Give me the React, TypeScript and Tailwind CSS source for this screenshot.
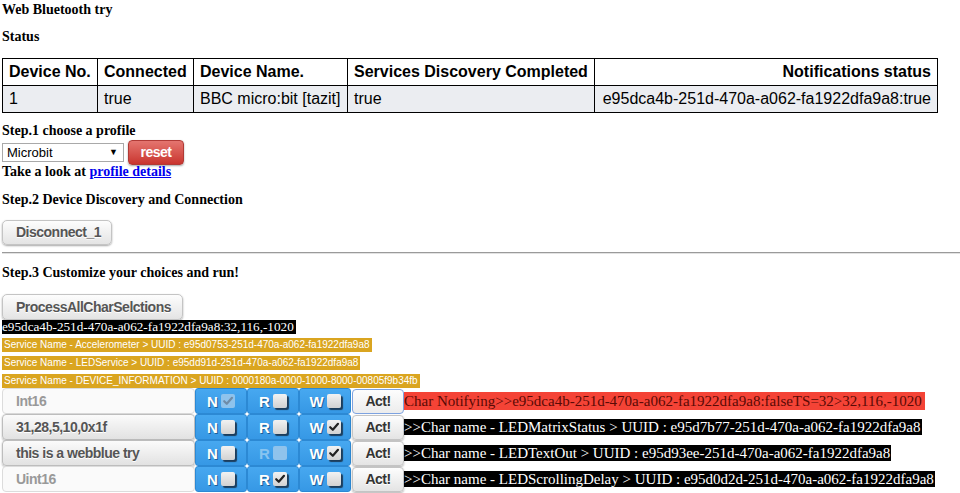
import React from "react";

function Check({ light }: { light?: boolean }) {
  return (
    <svg width="12" height="12" viewBox="0 0 12 12" className="block">
      <path d="M2.2 6.2 L4.8 8.8 L10 2.8" fill="none" stroke={light ? "#6f8ca8" : "#222"} strokeWidth="2.2" strokeLinecap="round" strokeLinejoin="round" />
    </svg>
  );
}

function Box({ checked, faded }: { checked?: boolean; faded?: boolean }) {
  if (faded) {
    return (
      <span className="inline-flex h-[14px] w-[14px] items-center justify-center rounded-[2px] bg-[#8fc3ec]">
        {checked && <Check light />}
      </span>
    );
  }
  return (
    <span className="inline-flex h-[14px] w-[14px] items-center justify-center rounded-[2px] bg-gradient-to-b from-[#f2f2f2] to-[#d2d2d2] shadow-[2px_2px_1px_#1c3d5c]">
      {checked && <Check />}
    </span>
  );
}

function Cell({ letter, checked, faded, dimLetter }: { letter: string; checked?: boolean; faded?: boolean; dimLetter?: boolean }) {
  return (
    <div className="flex h-[26px] w-[52px] items-center justify-center gap-[3px] rounded-[3px] border border-[#2c89d4] bg-gradient-to-b from-[#47a8f0] to-[#3698e5]">
      <span
        className={
          dimLetter
            ? "font-['Liberation_Sans',Arial,sans-serif] text-[15px] font-bold leading-none text-[#88c4f0]"
            : "font-['Liberation_Sans',Arial,sans-serif] text-[15px] font-bold leading-none text-white [text-shadow:1px_1px_0_#1d5f96]"
        }
      >
        {letter}
      </span>
      <Box checked={checked} faded={faded} />
    </div>
  );
}

const sans = "font-['Liberation_Sans',Arial,sans-serif]";
const serif = "font-['Liberation_Serif','Times_New_Roman',serif]";
const btnText = "text-[14px] font-bold tracking-[-0.5px]";

type Row = {
  value: string;
  placeholder: boolean;
  n: [boolean, boolean];
  r: [boolean, boolean];
  w: [boolean, boolean];
  focus?: boolean;
  text: string;
  red?: boolean;
};

const rows: Row[] = [
  { value: "Int16", placeholder: true, n: [true, true], r: [false, false], w: [false, false], focus: true, text: "Char Notifying>>e95dca4b-251d-470a-a062-fa1922dfa9a8:falseTS=32>32,116,-1020", red: true },
  { value: "31,28,5,10,0x1f", placeholder: false, n: [false, false], r: [false, false], w: [true, false], text: ">>Char name - LEDMatrixStatus > UUID : e95d7b77-251d-470a-a062-fa1922dfa9a8" },
  { value: "this is a webblue try", placeholder: false, n: [false, false], r: [false, true], w: [true, false], text: ">>Char name - LEDTextOut > UUID : e95d93ee-251d-470a-a062-fa1922dfa9a8" },
  { value: "Uint16", placeholder: true, n: [false, false], r: [true, false], w: [false, false], text: ">>Char name - LEDScrollingDelay > UUID : e95d0d2d-251d-470a-a062-fa1922dfa9a8" },
];

export default function App() {
  return (
    <div className="h-[493px] w-[960px] overflow-hidden bg-white pl-[2px] text-black">
      <div className={`${serif} mt-[2px] text-[14px] font-bold leading-[16px]`}>Web Bluetooth try</div>
      <div className={`${serif} mt-[11px] text-[14px] font-bold leading-[16px]`}>Status</div>

      <table className={`${sans} mt-[13px] w-[935px] table-fixed border-collapse whitespace-nowrap text-[16px] leading-[18px]`}>
        <colgroup>
          <col className="w-[95px]" />
          <col className="w-[96px]" />
          <col className="w-[154px]" />
          <col className="w-[247px]" />
          <col className="w-[343px]" />
        </colgroup>
        <thead>
          <tr className="h-[27px]">
            <th className="border border-black px-[6px] text-left font-bold">Device No.</th>
            <th className="border border-black px-[6px] text-left font-bold">Connected</th>
            <th className="border border-black px-[6px] text-left font-bold">Device Name.</th>
            <th className="border border-black px-[6px] text-left font-bold">Services Discovery Completed</th>
            <th className="border border-black px-[6px] text-right font-bold">Notifications status</th>
          </tr>
        </thead>
        <tbody>
          <tr className="h-[27px] bg-[#ebedf1]">
            <td className="border border-black px-[6px] text-left">1</td>
            <td className="border border-black px-[6px] text-left">true</td>
            <td className="border border-black px-[6px] text-left">BBC micro:bit [tazit]</td>
            <td className="border border-black px-[6px] text-left">true</td>
            <td className="border border-black px-[6px] text-right">e95dca4b-251d-470a-a062-fa1922dfa9a8:true</td>
          </tr>
        </tbody>
      </table>

      <div className={`${serif} mt-[10px] text-[14px] font-bold leading-[16px]`}>Step.1 choose a profile</div>
      <div className="mt-[1px] flex h-[25px] items-center gap-[4px]">
        <div className={`${sans} flex h-[19px] w-[122px] items-center justify-between border border-[#a9a9a9] bg-white pl-[4px] pr-[5px] text-[13px] leading-none text-black`}>
          <span>Microbit</span>
          <span className="text-[9px]">▼</span>
        </div>
        <div className={`${sans} ${btnText} flex h-[25px] w-[56px] items-center justify-center rounded-[4px] border border-[#b03a36] bg-gradient-to-b from-[#e4746f] to-[#c9332e] text-white shadow-[0_1px_2px_rgba(0,0,0,0.35)]`}>
          reset
        </div>
      </div>
      <div className={`${serif} mt-[-1px] text-[14px] font-bold leading-[16px]`}>
        Take a look at <span className="text-[#0000ee] underline">profile details</span>
      </div>

      <div className={`${serif} mt-[12px] text-[14px] font-bold leading-[16px]`}>Step.2 Device Discovery and Connection</div>
      <div className="mt-[12px] flex">
        <div className={`${sans} ${btnText} flex h-[25px] w-[110px] items-center rounded-[5px] border border-[#c4c4c4] bg-gradient-to-b from-[#fdfdfd] to-[#e4e4e4] pl-[13px] text-[#555] shadow-[0_1px_2px_rgba(0,0,0,0.35)] [text-shadow:0_1px_0_#fff]`}>
          Disconnect_1
        </div>
      </div>
      <div className="mt-[7px] h-[2px] border-t border-b border-t-[#9a9a9a] border-b-[#e2e2e2]" />

      <div className={`${serif} mt-[11px] text-[14px] font-bold leading-[16px]`}>Step.3 Customize your choices and run!</div>
      <div className="mt-[13px] flex">
        <div className={`${sans} ${btnText} flex h-[26px] w-[181px] items-center rounded-[5px] border border-[#c4c4c4] bg-gradient-to-b from-[#fdfdfd] to-[#e4e4e4] pl-[13px] text-[#555] shadow-[0_1px_2px_rgba(0,0,0,0.35)] [text-shadow:0_1px_0_#fff]`}>
          ProcessAllCharSelctions
        </div>
      </div>
      <div className="flex">
        <div className={`${serif} h-[14px] bg-black pr-[2px] text-[13.2px] leading-[14px] text-white`}>e95dca4b-251d-470a-a062-fa1922dfa9a8:32,116,-1020</div>
      </div>
      <div className="mt-[4px] flex flex-col items-start gap-[4px]">
        <div className={`${sans} h-[14px] bg-[#daa520] px-[2px] text-[10px] leading-[14px] text-white`}>Service Name - Accelerometer &gt; UUID : e95d0753-251d-470a-a062-fa1922dfa9a8</div>
        <div className={`${sans} h-[14px] bg-[#daa520] px-[2px] text-[10px] leading-[14px] text-white`}>Service Name - LEDService &gt; UUID : e95dd91d-251d-470a-a062-fa1922dfa9a8</div>
        <div className={`${sans} h-[14px] bg-[#daa520] px-[2px] text-[10px] leading-[14px] text-white`}>Service Name - DEVICE_INFORMATION &gt; UUID : 0000180a-0000-1000-8000-00805f9b34fb</div>
      </div>

      <div className="flex flex-col">
        {rows.map((r, i) => (
          <div key={i} className="flex h-[26px] items-center">
            {r.placeholder ? (
              <div className={`${sans} ${btnText} flex h-[26px] w-[193px] items-center rounded-[4px] border border-[#dcdcdc] bg-[#fafafa] pl-[13px] text-[#999]`}>
                {r.value}
              </div>
            ) : (
              <div className={`${sans} ${btnText} flex h-[26px] w-[193px] items-center rounded-[4px] border border-[#bdbdbd] bg-gradient-to-b from-[#fbfbfb] to-[#e2e2e2] pl-[13px] text-[#555] shadow-[0_1px_2px_rgba(0,0,0,0.3)] [text-shadow:0_1px_0_#fff]`}>
                {r.value}
              </div>
            )}
            <Cell letter="N" checked={r.n[0]} faded={r.n[1]} />
            <Cell letter="R" checked={r.r[0]} faded={r.r[1]} dimLetter={r.r[1]} />
            <Cell letter="W" checked={r.w[0]} faded={r.w[1]} />
            <div
              className={
                r.focus
                  ? `${sans} ${btnText} ml-[1px] flex h-[25px] w-[52px] items-center justify-center rounded-[4px] border border-[#7da2e0] bg-gradient-to-b from-[#fdfdfd] to-[#ececec] text-[#333]`
                  : `${sans} ${btnText} ml-[1px] flex h-[25px] w-[52px] items-center justify-center rounded-[4px] border border-[#c4c4c4] bg-gradient-to-b from-[#fdfdfd] to-[#e4e4e4] text-[#333] shadow-[0_1px_2px_rgba(0,0,0,0.3)] [text-shadow:0_1px_0_#fff]`
              }
            >
              Act!
            </div>
            {r.red ? (
              <div className={`${serif} h-[18px] bg-[#f44336] pr-[3px] text-[15px] leading-[18px] text-[#5a0a05]`}>{r.text}</div>
            ) : (
              <div className={`${serif} h-[16px] bg-black pr-[1px] text-[15px] leading-[16px] text-white`}>{r.text}</div>
            )}
          </div>
        ))}
      </div>
    </div>
  );
}
